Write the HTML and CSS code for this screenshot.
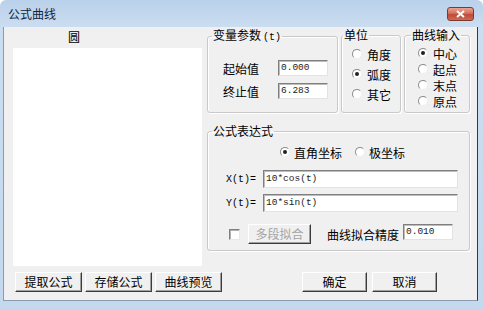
FILE: index.html
```html
<!DOCTYPE html>
<html lang="zh-CN">
<head>
  <meta charset="UTF-8">
  <title>公式曲线</title>
  <link rel="stylesheet" href="styles.css">
</head>
<body>

  <div class="window">
    <div class="titlebar">
      <span class="title">公式曲线</span>
      <span class="close">
        <svg width="9" height="8" viewBox="0 0 9 8"><path d="M1 1 L8 7 M8 1 L1 7" stroke="#fff" stroke-width="2"/></svg>
      </span>
    </div>

    <div class="client">
      <div class="main">
        <div class="left">
          <div class="caption">圆</div>
          <div class="listbox"></div>
        </div>

        <div class="right">
          <div class="row1">
            <fieldset class="grp grp-var">
              <legend>变量参数<span class="t">(t)</span></legend>
              <div class="body">
                <div class="field"><span class="lbl">起始值</span><span class="edit w50">0.000</span></div>
                <div class="field"><span class="lbl">终止值</span><span class="edit w50">6.283</span></div>
              </div>
            </fieldset>

            <fieldset class="grp grp-unit">
              <legend>单位</legend>
              <div class="body">
                <div class="opt"><span class="radio"></span>角度</div>
                <div class="opt"><span class="radio on"></span>弧度</div>
                <div class="opt"><span class="radio"></span>其它</div>
              </div>
            </fieldset>

            <fieldset class="grp grp-input">
              <legend>曲线输入</legend>
              <div class="body">
                <div class="opt"><span class="radio on"></span>中心</div>
                <div class="opt"><span class="radio"></span>起点</div>
                <div class="opt"><span class="radio"></span>末点</div>
                <div class="opt"><span class="radio"></span>原点</div>
              </div>
            </fieldset>
          </div>

          <fieldset class="grp grp-formula">
            <legend>公式表达式</legend>
            <div class="body">
              <div class="coords">
                <div class="opt"><span class="radio on"></span>直角坐标</div>
                <div class="opt polar"><span class="radio"></span>极坐标</div>
              </div>
              <div class="expr x-row"><span class="mono">X(t)=</span><span class="edit wide">10*cos(t)</span></div>
              <div class="expr y-row"><span class="mono">Y(t)=</span><span class="edit wide">10*sin(t)</span></div>
              <div class="fit">
                <span class="check"></span>
                <span class="btn disabled">多段拟合</span>
                <span class="fit-lbl">曲线拟合精度</span>
                <span class="edit w50">0.010</span>
              </div>
            </div>
          </fieldset>
        </div>
      </div>

      <div class="footer">
        <span class="btn">提取公式</span>
        <span class="btn">存储公式</span>
        <span class="btn">曲线预览</span>
        <span class="btn ok">确定</span>
        <span class="btn cancel">取消</span>
      </div>
    </div>
  </div>

</body>
</html>
```

FILE: styles.css
```css
body {
  margin: 0;
  font-family: "Noto Sans CJK SC", sans-serif;
  font-size: 12px;
  color: #000;
  background: #fff;
}
.window {
  width: 483px;
  height: 309px;
  background: linear-gradient(#b9d1ea, #cbddf1 27px, #c4d9ee);
  border-radius: 6px 6px 0 0;
  overflow: hidden;
}
.titlebar {
  height: 27px;
  display: flex;
  align-items: center;
  justify-content: space-between;
  padding: 0 9px 0 8px;
  box-sizing: border-box;
}
.title {
  color: #10243f;
  line-height: 14px;
}
.close {
  width: 27px;
  height: 14px;
  box-sizing: border-box;
  border: 1px solid #7b3a30;
  border-radius: 3px;
  background: linear-gradient(#e9a595, #d0705f 45%, #c04a38 55%, #cf6a55);
  display: flex;
  align-items: center;
  justify-content: center;
}
.client {
  margin-left: 3px;
  width: 475px;
  height: 274px;
  box-sizing: border-box;
  background: #f0f0f0;
  border-left: 1px solid #8a9bb0;
  border-right: 1px solid #2c3a4c;
  border-bottom: 1px solid #8a9bb0;
  padding-left: 9px;
}
.main {
  display: flex;
  gap: 5px;
}
.left {
  width: 189px;
  padding-top: 2px;
}
.caption {
  line-height: 16px;
  padding-left: 55px;
  margin-bottom: 3px;
}
.listbox {
  height: 218px;
  background: #fff;
}
.right {
  width: 263px;
  padding-top: 1px;
  display: flex;
  flex-direction: column;
  gap: 11px;
}
.row1 {
  display: flex;
  gap: 3px;
}
.grp {
  margin: 0;
  padding: 0;
  min-width: 0;
  box-sizing: border-box;
  border: 1px solid #c9c9c9;
  border-radius: 3px;
  box-shadow: inset 1px 1px #fff, 1px 1px #fff;
}
.grp legend {
  margin-left: 4px;
  padding: 0 1px;
  line-height: 14px;
  white-space: nowrap;
}
.t {
  font-family: "Liberation Mono", monospace;
  font-size: 10px;
  margin-left: 2px;
}
.grp-var {
  width: 131px;
  height: 85px;
}
.grp-var .body {
  padding: 15px 0 0 15px;
}
.grp-unit {
  width: 60px;
  height: 85px;
}
.grp-unit legend {
  margin-left: 1px;
}
.grp-unit .body {
  padding: 4px 0 0 10px;
}
.grp-unit .opt + .opt {
  margin-top: 4px;
}
.grp-input {
  width: 66px;
  height: 85px;
}
.grp-input legend {
  margin-left: 6px;
}
.grp-input .body {
  padding: 3px 0 0 13px;
}
.field {
  display: flex;
  align-items: center;
  height: 16px;
}
.field + .field {
  margin-top: 7px;
}
.lbl {
  width: 55px;
}
.edit {
  box-sizing: border-box;
  height: 16px;
  background: #fff;
  border: 1px solid;
  border-color: #7f7f7f #e3e3e3 #e3e3e3 #7f7f7f;
  box-shadow: inset 1px 1px #bdbdbd;
  padding: 1px 0 0 2px;
  font-family: "Liberation Mono", monospace;
  font-size: 9.5px;
  line-height: 12px;
  color: #222;
}
.w50 {
  width: 50px;
}
.opt {
  display: flex;
  align-items: center;
  height: 16px;
}
.radio {
  width: 10px;
  height: 10px;
  box-sizing: border-box;
  border-radius: 50%;
  border: 1px solid;
  border-color: #8a8a8a #eeeeee #eeeeee #8a8a8a;
  background: #fff;
  margin-right: 5px;
  display: flex;
  align-items: center;
  justify-content: center;
}
.radio.on::after {
  content: "";
  width: 4px;
  height: 4px;
  border-radius: 50%;
  background: #222;
}
.grp-formula {
  height: 127px;
}
.grp-formula .body {
  padding: 6px 0 0 18px;
}
.coords {
  display: flex;
  padding-left: 54px;
}
.coords .radio {
  margin-right: 4px;
}
.polar {
  margin-left: 13px;
}
.expr {
  display: flex;
  align-items: center;
  height: 18px;
}
.x-row {
  margin-top: 10px;
}
.y-row {
  margin-top: 6px;
}
.mono {
  width: 37px;
  font-family: "Liberation Mono", monospace;
  font-size: 10px;
}
.edit.wide {
  width: 195px;
  height: 18px;
  padding-top: 2px;
}
.fit {
  display: flex;
  align-items: center;
  height: 20px;
  margin-top: 12px;
  padding-left: 3px;
}
.check {
  width: 11px;
  height: 11px;
  box-sizing: border-box;
  border: 1px solid;
  border-color: #808080 #e8e8e8 #e8e8e8 #808080;
  box-shadow: inset 1px 1px #b0b0b0;
  background: #fff;
}
.fit .btn {
  width: 63px;
  margin-left: 8px;
}
.fit-lbl {
  margin-left: 16px;
}
.fit .edit {
  margin-left: 4px;
  align-self: flex-start;
}
.btn {
  box-sizing: border-box;
  width: 67px;
  height: 20px;
  background: #f0f0f0;
  border: 1px solid;
  border-color: #fff #3c3c3c #3c3c3c #fff;
  box-shadow: inset -1px -1px #a0a0a0;
  display: flex;
  align-items: center;
  justify-content: center;
  line-height: 14px;
}
.btn.disabled {
  color: #a3a3a3;
}
.footer {
  display: flex;
  gap: 3px;
  margin-top: 6px;
  padding-left: 2px;
}
.footer .ok {
  width: 65px;
  margin-left: 77px;
}
.footer .cancel {
  width: 65px;
  margin-left: 2px;
}
```
